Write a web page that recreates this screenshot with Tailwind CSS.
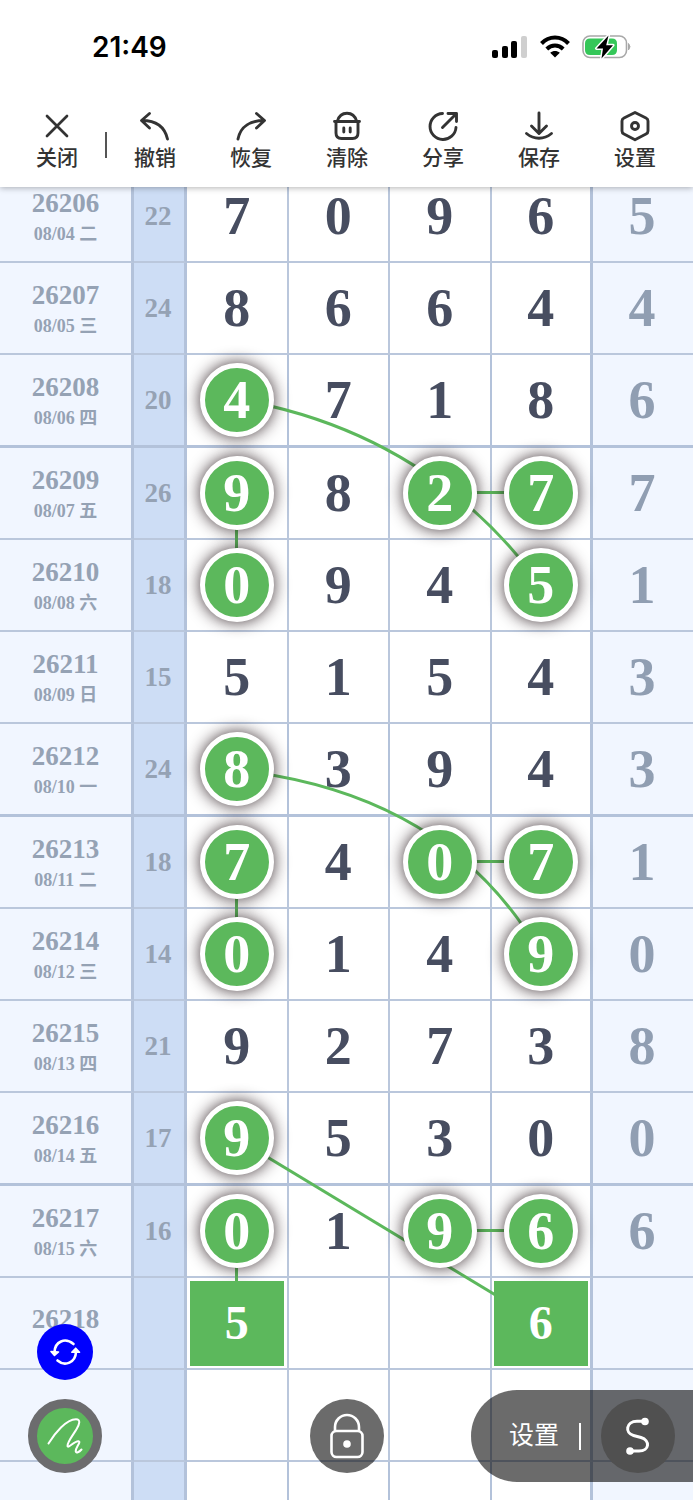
<!DOCTYPE html>
<html lang="zh-CN">
<head>
    <meta charset="UTF-8">
    <meta name="viewport" content="width=device-width, initial-scale=1.0">
    <title>走势图</title>
    <script src="https://cdn.jsdelivr.net/npm/@tailwindcss/browser@4"></script>
</head>
<body class="bg-white font-['Inter','Noto_Sans_CJK_SC',sans-serif]">
<div class="relative flex h-screen flex-col overflow-hidden">

    <!-- Header: status bar + toolbar -->
    <header class="relative z-30 bg-white shadow-[0_1px_6px_rgba(0,0,0,0.3)]">
        <div class="flex h-[94px] items-center justify-between pr-[61px] pl-[92px]">
            <time class="text-[28px] font-semibold text-black">21:49</time>
            <div class="flex items-center gap-3">
                <svg class="h-6 w-9" viewBox="0 0 36 24">
                    <rect x="0" y="15" width="6" height="8" rx="2"/>
                    <rect x="10" y="11" width="6" height="12" rx="2"/>
                    <rect x="19" y="6" width="6" height="17" rx="2"/>
                    <rect x="29" y="1" width="6" height="22" rx="2" fill="#cfcfcf"/>
                </svg>
                <svg class="h-6 w-[30px]" viewBox="0 0 30 24" fill="none" stroke="#000" stroke-width="4">
                    <path d="M1.5 8.500C9 .6 21 .6 28.500 8.500"/>
                    <path d="M6.800 14C11.500 9.400 18.500 9.400 23.200 14"/>
                    <path d="M15 22.500l-4.800-4.700C13 15.500 17 15.500 19.800 17.800z" fill="#000" stroke="none"/>
                </svg>
                <svg class="h-6 w-[50px]" viewBox="0 0 50 24">
                    <rect x="1" y="1" width="43.500" height="21.500" rx="7" fill="#fff" stroke="#a8a8a8" stroke-width="1.600"/>
                    <path d="M46.500 8.500q3 3.200 0 6.500z" fill="#a8a8a8" stroke="#a8a8a8"/>
                    <path d="M8 3.500h22q5 0 5 5v6.500q0 5-5 5H8q-5 0-5-5V8.500q0-5 5-5z" fill="#35c759"/>
                    <path d="M26.500.5L14.500 13.500h6.500L19.500 23.500 31 10.200h-6.800z" stroke="#fff" stroke-width="3" stroke-linejoin="round"/>
                    <path d="M26.500.5L14.500 13.500h6.500L19.500 23.500 31 10.200h-6.800z"/>
                </svg>
            </div>
        </div>

        <nav class="flex h-[93px] items-start pt-4 pr-[10px] pl-[9px] text-[21px] leading-8 font-medium text-[#333]">
            <button class="flex flex-1 flex-col items-center">
                <svg class="h-8 w-8" viewBox="0 0 32 32" fill="none" stroke="currentColor" stroke-width="2.700" stroke-linecap="round"><path d="M6 6l20 20M26 6L6 26"/></svg>
                关闭
            </button>
            <span class="mt-[22px] h-[26px] w-0.5 bg-[#555]"></span>
            <button class="flex flex-1 flex-col items-center">
                <svg class="h-8 w-8" viewBox="0 0 32 32" fill="none" stroke="currentColor" stroke-width="2.900" stroke-linecap="round" stroke-linejoin="round"><path d="M10.500 3.500L2.500 10.500 10.500 18M3 10.500C16 10.500 25.500 16 28.500 29"/></svg>
                撤销
            </button>
            <button class="flex flex-1 flex-col items-center">
                <svg class="h-8 w-8" viewBox="0 0 32 32" fill="none" stroke="currentColor" stroke-width="2.900" stroke-linecap="round" stroke-linejoin="round"><path d="M21.500 3.500L29.500 10.500 21.500 18M29 10.500C16 10.500 5.500 16 3 29"/></svg>
                恢复
            </button>
            <button class="flex flex-1 flex-col items-center">
                <svg class="h-8 w-8" viewBox="0 0 32 32" fill="none" stroke="currentColor" stroke-width="2.900" stroke-linecap="round" stroke-linejoin="round"><path d="M3.500 11.500h25M6.500 11C8 5.500 11 3.200 16 3.200S24 5.500 25.500 11M5 12v11q0 5.500 5.500 5.500h11q5.500 0 5.500-5.500V12M12.800 18v4M19.200 18v4"/></svg>
                清除
            </button>
            <button class="flex flex-1 flex-col items-center">
                <svg class="h-8 w-8" viewBox="0 0 32 32" fill="none" stroke="currentColor" stroke-width="2.900" stroke-linecap="round" stroke-linejoin="round"><path d="M15.500 3.500A13 13 0 1 0 29 17.500M15.500 17.500L29.500 3.500M21 3.500h8.500v8"/></svg>
                分享
            </button>
            <button class="flex flex-1 flex-col items-center">
                <svg class="h-8 w-8" viewBox="0 0 32 32" fill="none" stroke="currentColor" stroke-width="2.900" stroke-linecap="round" stroke-linejoin="round"><path d="M16 3v20M8.500 16L16 23.500 23.500 16M3.500 23.500C11 29.800 21 29.800 28.500 23.500"/></svg>
                保存
            </button>
            <button class="flex flex-1 flex-col items-center">
                <svg class="h-8 w-8" viewBox="0 0 32 32" fill="none" stroke="currentColor" stroke-width="2.900" stroke-linejoin="round"><path d="M16 2.500L27 8q2 1 2 3v10q0 2-2 3L16 29.700 5 24q-2-1-2-3V11q0-2 2-3z"/><circle cx="16" cy="16" r="3.500"/></svg>
                设置
            </button>
        </nav>
    </header>

    <!-- Trend chart, scrolled part of a row under the header -->
    <main class="relative -mt-4 flex-1 overflow-hidden">
        <div class="relative">
            <table class="w-full table-fixed border-separate border-spacing-0 text-center font-['Liberation_Serif','Noto_Sans_CJK_SC',serif] font-bold">
                <colgroup>
                    <col class="w-[134px]">
                    <col class="w-[53px]">
                    <col><col><col><col>
                    <col class="w-[100px]">
                </colgroup>
                <tbody id="rows"></tbody>
            </table>
            <svg class="pointer-events-none absolute inset-0 z-10 h-full w-full" viewBox="0 0 693 1384" preserveAspectRatio="none" fill="none" stroke="#5cb85c" stroke-width="3">
                <path d="M236 228Q428 261 540 413"/>
                <path d="M236 599Q448 622 540 782"/>
                <path d="M236 967L540 1151"/>
                <path d="M236.500 321v92M236.500 690v92M236.500 1059v60"/>
                <path d="M439 321.500h101M439 690.500h101M439 1059.500h101"/>
            </svg>
        </div>
    </main>

    <!-- Floating controls -->
    <div class="absolute inset-x-0 bottom-[18px] z-30 grid grid-cols-3 items-center">
        <div class="relative ml-7 w-[74px] justify-self-start">
            <button aria-label="切换" class="absolute bottom-full left-[9px] mb-[19px] flex size-14 items-center justify-center rounded-full bg-[#0000fe]">
                <svg class="h-8 w-8" viewBox="0 0 32 32" fill="none" stroke="#fff" stroke-width="2.600" stroke-linecap="round"><path d="M5.500 16C6 5.500 16 1 24.500 8M27 16C26.500 26.500 16 31 8.500 24.500"/><path d="M2 15.500l3.500 4L9.500 16zM22.800 16.200l3.900-4 3.800 4z" fill="#fff" stroke-width="1.600" stroke-linejoin="round"/></svg>
            </button>
            <button aria-label="画笔" class="flex size-[74px] items-center justify-center rounded-full border-9 border-[#6c6c6e] bg-[#5cb85c]">
                <svg class="h-10 w-10" viewBox="0 0 40 40" fill="none" stroke="#fff" stroke-width="2" stroke-linecap="round" stroke-linejoin="round"><path d="M3.500 27.500C10 17 21 3.500 31 3.300c5 0 3.500 5 .5 10C28 19 22 26.500 22.500 30c.8 3 7-5.500 11-4.800 3 .6-3 6.300-2.800 10 .3 2.500 3.500 1 5.800-1.700"/></svg>
            </button>
        </div>
        <button aria-label="锁定" class="flex size-[74px] items-center justify-center justify-self-center rounded-full bg-black/58">
            <svg class="h-12 w-10" viewBox="0 0 40 48" fill="none" stroke="#fff" stroke-width="2.600"><rect x="4.500" y="19" width="31" height="26" rx="5"/><path d="M8 19V15a12 12 0 0 1 24 0v4"/><circle cx="20" cy="32" r="3.800" fill="#fff" stroke="none"/></svg>
        </button>
        <div class="flex h-[92px] items-center justify-self-end rounded-l-full bg-black/58 pr-[18px] pl-[38px] text-white">
            <button class="text-[25px]">设置</button>
            <span class="mx-5 h-[27px] w-0.5 bg-white"></span>
            <button aria-label="曲线" class="flex size-[74px] items-center justify-center rounded-full bg-[#505050]">
                <svg class="h-10 w-8" viewBox="0 0 32 40" fill="none" stroke="#fff" stroke-width="3" stroke-linecap="round"><path d="M23 5.300H15C4 5.300 2.500 17 11.500 19.500L19 21.500C28.500 24.500 27.500 35 17 35H8"/><circle cx="23" cy="5.500" r="3.800" fill="#fff" stroke="none"/><circle cx="8" cy="35" r="3.800" fill="#fff" stroke="none"/></svg>
            </button>
        </div>
    </div>
</div>

<script>
    // issue, date, sum, four numbers, tail; * marks a selected number, # a predicted one
    const data = [
        ['26206', '08/04 二', '22', '7', '0', '9', '6', '5'],
        ['26207', '08/05 三', '24', '8', '6', '6', '4', '4'],
        ['26208', '08/06 四', '20', '4*', '7', '1', '8', '6'],
        ['26209', '08/07 五', '26', '9*', '8', '2*', '7*', '7'],
        ['26210', '08/08 六', '18', '0*', '9', '4', '5*', '1'],
        ['26211', '08/09 日', '15', '5', '1', '5', '4', '3'],
        ['26212', '08/10 一', '24', '8*', '3', '9', '4', '3'],
        ['26213', '08/11 二', '18', '7*', '4', '0*', '7*', '1'],
        ['26214', '08/12 三', '14', '0*', '1', '4', '9*', '0'],
        ['26215', '08/13 四', '21', '9', '2', '7', '3', '8'],
        ['26216', '08/14 五', '17', '9*', '5', '3', '0', '0'],
        ['26217', '08/15 六', '16', '0*', '1', '9*', '6*', '6'],
        ['26218', '', '', '5#', '', '', '6#', ''],
        ['', '', '', '', '', '', '', ''],
        ['', '', '', '', '', '', '', '']
    ];

    function numberCell(value) {
        if (value.endsWith('*')) {
            return `<span class="relative z-20 mx-auto flex size-[74px] items-center justify-center rounded-full border-5 border-white bg-[#5cb85c] text-white shadow-[0_0_16px_rgba(30,15,20,0.85)]">${value[0]}</span>`;
        }
        if (value.endsWith('#')) {
            return `<span class="relative z-20 mx-auto flex h-[85px] w-[94px] items-center justify-center bg-[#5cb85c] text-[48px] text-white">${value[0]}</span>`;
        }
        return value;
    }

    document.getElementById('rows').innerHTML = data.map((row, i) => {
        const [issue, date, sum, a, b, c, d, tail] = row;
        // every fourth line is a heavier one
        const heavy = i % 4 === 2;
        const line = heavy ? 'border-b-3 border-[#b3c2da]' : 'border-b-2 border-[#bac7dc]';
        return `<tr class="${heavy ? 'h-[93px]' : 'h-[92px]'}">
            <th scope="row" class="${line} border-r-3 border-r-[#b3c2da] bg-[#f1f6ff] px-0 pt-1 ${date ? 'pb-0' : 'pb-3'} text-[27px] leading-8 text-[#95a2b4]">${issue}${date ? `<div class="text-[18px] leading-[30px]">${date}</div>` : ''}</th>
            <td class="${line} border-r-3 border-r-[#b3c2da] bg-[#cdddf5] p-0 pr-0.5 text-[27px] text-[#95a2b4]">${sum}</td>
            <td class="${line} border-r-2 p-0 text-[54px] leading-none text-[#474d60]">${numberCell(a)}</td>
            <td class="${line} border-r-2 p-0 text-[54px] leading-none text-[#474d60]">${numberCell(b)}</td>
            <td class="${line} border-r-2 p-0 text-[54px] leading-none text-[#474d60]">${numberCell(c)}</td>
            <td class="${line} border-r-3 border-r-[#b3c2da] p-0 text-[54px] leading-none text-[#474d60]">${numberCell(d)}</td>
            <td class="${line} bg-[#f1f6ff] p-0 pr-0.5 text-[54px] leading-none text-[#909eb2]">${tail}</td>
        </tr>`;
    }).join('');
</script>
</body>
</html>
